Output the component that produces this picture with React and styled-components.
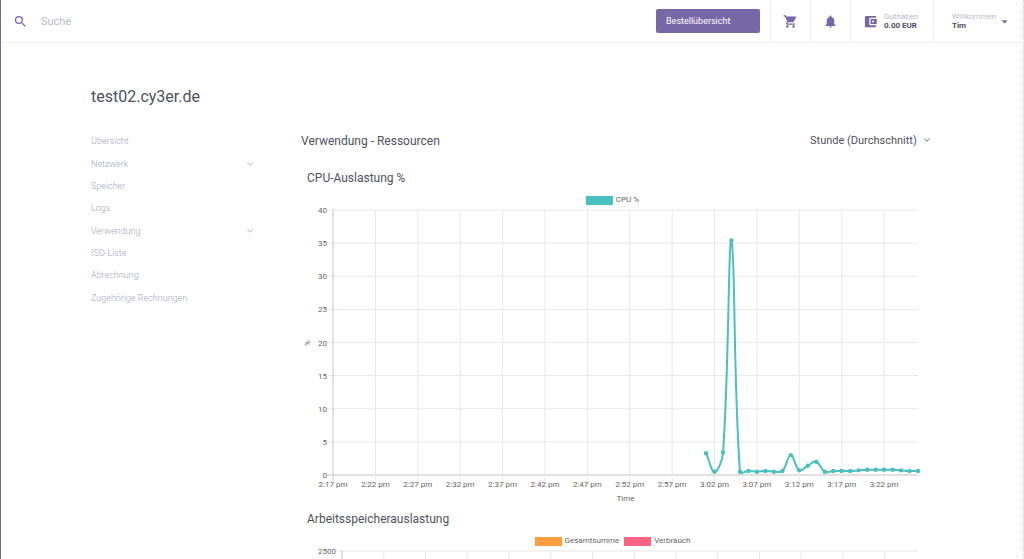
import React, { useState } from 'react';
import styled, { createGlobalStyle } from 'styled-components';
import { MdSearch, MdShoppingCart, MdNotifications, MdAccountBalanceWallet, MdArrowDropDown } from 'react-icons/md';
import { FiChevronDown } from 'react-icons/fi';

const navItems = [
  { label: 'Übersicht' },
  { label: 'Netzwerk', expandable: true },
  { label: 'Speicher' },
  { label: 'Logs' },
  { label: 'Verwendung', expandable: true },
  { label: 'ISO-Liste' },
  { label: 'Abrechnung' },
  { label: 'Zugehörige Rechnungen' },
];

const timeLabels = [
  '2:17 pm', '2:22 pm', '2:27 pm', '2:32 pm', '2:37 pm', '2:42 pm', '2:47 pm',
  '2:52 pm', '2:57 pm', '3:02 pm', '3:07 pm', '3:12 pm', '3:17 pm', '3:22 pm',
];

// one value per minute, the last one is the newest
const cpuValues = [
  3.3, 0.5, 3.4, 35.4, 0.5, 0.6, 0.5, 0.6, 0.5, 0.6, 3.0, 0.7, 1.4,
  2.0, 0.5, 0.6, 0.6, 0.6, 0.7, 0.8, 0.8, 0.8, 0.8, 0.7, 0.6, 0.6,
];

const MINUTES = 69;
const CHART_WIDTH = 623;
const PLOT_RIGHT = 617;
const PLOT_TOP = 4;
const PLOT_BOTTOM = 269;

// smooth curve through the points, control points stay inside the plot
const buildPath = (points) => {
  const tension = 0.4;
  const clamp = (y) => Math.max(PLOT_TOP, Math.min(PLOT_BOTTOM, y));
  const controls = points.map((p, i) => {
    const prev = points[i - 1] || p;
    const next = points[i + 1] || p;
    const d1 = Math.hypot(p.x - prev.x, p.y - prev.y);
    const d2 = Math.hypot(next.x - p.x, next.y - p.y);
    const a = (tension * d1) / (d1 + d2);
    const b = (tension * d2) / (d1 + d2);
    return {
      inX: p.x - a * (next.x - prev.x),
      inY: clamp(p.y - a * (next.y - prev.y)),
      outX: p.x + b * (next.x - prev.x),
      outY: clamp(p.y + b * (next.y - prev.y)),
    };
  });
  return points.map((p, i) => {
    if (i === 0) return `M${p.x} ${p.y}`;
    const from = controls[i - 1];
    const to = controls[i];
    return `C${from.outX} ${from.outY} ${to.inX} ${to.inY} ${p.x} ${p.y}`;
  }).join(' ');
};

const LineChart = ({ title, legend, max, step, left, unit, values = [], color }) => {
  const perMinute = (PLOT_RIGHT - left) / MINUTES;
  const toY = (value) => PLOT_BOTTOM - (value / max) * (PLOT_BOTTOM - PLOT_TOP);
  const ticks = [];
  for (let value = 0; value <= max; value += step) {
    ticks.push(value);
  }
  const points = values.map((value, i) => ({
    x: left + (MINUTES - values.length + 1 + i) * perMinute,
    y: toY(value),
  }));

  return (
    <ChartSection>
      <ChartTitle>{title}</ChartTitle>
      <Legend>
        {legend.map((entry) => (
          <LegendItem key={entry.label}>
            <Swatch $color={entry.color} />
            {entry.label}
          </LegendItem>
        ))}
      </Legend>
      <ChartSvg viewBox={`0 0 ${CHART_WIDTH} 287`} role="img" aria-label={title}>
        {ticks.map((value) => (
          <g key={value}>
            <GridLine x1={left - 6} x2={PLOT_RIGHT} y1={toY(value)} y2={toY(value)} $strong={value === 0} />
            <TickText x={left - 6} y={toY(value) + 3} textAnchor="end">{value}</TickText>
          </g>
        ))}
        {timeLabels.map((label, i) => {
          const x = left + i * 5 * perMinute;
          return (
            <g key={label}>
              <GridLine x1={x} x2={x} y1={PLOT_TOP} y2={PLOT_BOTTOM + 6} $strong={i === 0} />
              <TickText x={x} y={PLOT_BOTTOM + 12} textAnchor="middle">{label}</TickText>
            </g>
          );
        })}
        <TickText x={(left + PLOT_RIGHT) / 2} y={PLOT_BOTTOM + 26} textAnchor="middle">Time</TickText>
        {unit && <TickText transform="translate(9 137) rotate(-90)" textAnchor="middle">{unit}</TickText>}
        {points.length > 0 && <path d={buildPath(points)} fill="none" stroke={color} strokeWidth="2" />}
        {points.map((p) => <circle key={p.x} cx={p.x} cy={p.y} r="2.2" fill={color} />)}
      </ChartSvg>
    </ChartSection>
  );
};

const App = () => {
  const [search, setSearch] = useState('');
  const [range, setRange] = useState('hour');

  return (
    <Page>
      <GlobalStyle />
      <Header>
        <SearchLabel>
          <MdSearch size={15} color="#7867a7" />
          <SearchInput
            aria-label="Suche"
            placeholder="Suche"
            value={search}
            onChange={(e) => setSearch(e.target.value)}
          />
        </SearchLabel>
        <OrderButton type="button">Bestellübersicht</OrderButton>
        <IconButton type="button" aria-label="Warenkorb"><MdShoppingCart size={15} /></IconButton>
        <IconButton type="button" aria-label="Benachrichtigungen"><MdNotifications size={15} /></IconButton>
        <BalanceLink href="#guthaben">
          <MdAccountBalanceWallet size={15} />
          <TwoLines>
            <Muted>Guthaben</Muted>
            <Strong>0.00 EUR</Strong>
          </TwoLines>
        </BalanceLink>
        <UserButton type="button">
          <TwoLines>
            <Muted>Willkommen</Muted>
            <Strong>Tim</Strong>
          </TwoLines>
          <MdArrowDropDown size={15} />
        </UserButton>
      </Header>

      <Main>
        <PageTitle>test02.cy3er.de</PageTitle>
        <Columns>
          <Sidebar>
            {navItems.map((item) => (
              <NavLink key={item.label} href="#">
                {item.label}
                {item.expandable && <FiChevronDown size={10} />}
              </NavLink>
            ))}
          </Sidebar>

          <Content>
            <ContentHeader>
              <SectionTitle>Verwendung - Ressourcen</SectionTitle>
              <SelectWrap>
                <RangeSelect aria-label="Zeitraum" value={range} onChange={(e) => setRange(e.target.value)}>
                  <option value="hour">Stunde (Durchschnitt)</option>
                </RangeSelect>
                <FiChevronDown size={10} />
              </SelectWrap>
            </ContentHeader>

            <LineChart
              title="CPU-Auslastung %"
              legend={[{ label: 'CPU %', color: '#4bc0c0' }]}
              max={40}
              step={5}
              left={32}
              unit="%"
              values={cpuValues}
              color="#4bc0c0"
            />
            <LineChart
              title="Arbeitsspeicherauslastung"
              legend={[
                { label: 'Gesamtsumme', color: '#ff9f40' },
                { label: 'Verbrauch', color: '#ff6384' },
              ]}
              max={2500}
              step={500}
              left={41}
            />
          </Content>
        </Columns>
      </Main>
    </Page>
  );
};

export default App;

const GlobalStyle = createGlobalStyle`
  * {
    box-sizing: border-box;
  }
  html {
    scrollbar-width: none;
  }
  body {
    margin: 0;
    background: #fff;
    color: #50525f;
    font-family: Roboto, "Liberation Sans", sans-serif;
  }
  button, input, select {
    font-family: inherit;
  }
`;

const Page = styled.div`
  min-height: 100vh;
  border-left: 1px solid #6f6c97;
  border-right: 1px dotted #d4d4da;
`;

const Header = styled.header`
  display: flex;
  align-items: center;
  height: 43px;
  border-bottom: 1px solid #f1f1f4;
`;

const SearchLabel = styled.label`
  display: flex;
  flex: 1;
  align-items: center;
  gap: 13px;
  padding-left: 12px;
`;

const SearchInput = styled.input`
  flex: 1;
  min-width: 0;
  padding: 0;
  border: 0;
  outline: 0;
  background: none;
  font-size: 11px;
  color: #50525f;
  &::placeholder {
    color: #b9b9cd;
  }
`;

const OrderButton = styled.button`
  width: 104px;
  height: 24px;
  margin-right: 10px;
  padding: 0 10px;
  border: 0;
  border-radius: 2px;
  background: #7867a7;
  color: #fff;
  font-size: 9px;
  text-align: left;
`;

const IconButton = styled.button`
  display: flex;
  align-items: center;
  justify-content: center;
  width: 40px;
  height: 42px;
  padding: 0;
  border: 0;
  border-left: 1px solid #f1f1f4;
  background: none;
  color: #7867a7;
`;

const BalanceLink = styled.a`
  display: flex;
  align-items: center;
  gap: 6px;
  width: 83px;
  height: 42px;
  padding-left: 12px;
  border-left: 1px solid #f1f1f4;
  color: #7867a7;
  text-decoration: none;
`;

const UserButton = styled.button`
  display: flex;
  align-items: center;
  gap: 1px;
  width: 90px;
  height: 42px;
  padding: 0 10px 0 18px;
  border: 0;
  border-left: 1px solid #f1f1f4;
  background: none;
  color: #7867a7;
  text-align: left;
`;

const TwoLines = styled.span`
  display: flex;
  flex-direction: column;
  font-size: 8px;
  line-height: 9px;
`;

const Muted = styled.span`
  color: #b9b9cd;
`;

const Strong = styled.strong`
  color: #50525f;
  font-weight: 700;
`;

const Main = styled.main`
  padding: 43px 89px 0 90px;
`;

const PageTitle = styled.h1`
  margin: 0;
  font-size: 16px;
  line-height: 21px;
  font-weight: 400;
`;

const Columns = styled.div`
  display: grid;
  grid-template-columns: 164px 1fr;
  align-items: start;
  gap: 46px;
  margin-top: 23px;
`;

const Sidebar = styled.nav`
  display: flex;
  flex-direction: column;
  height: 179px;
`;

const NavLink = styled.a`
  display: flex;
  flex: 1;
  align-items: center;
  justify-content: space-between;
  color: #a6a6be;
  font-size: 9px;
  font-weight: 300;
  text-decoration: none;
`;

const Content = styled.div`
  min-width: 0;
`;

const ContentHeader = styled.div`
  display: flex;
  align-items: center;
  justify-content: space-between;
  height: 22px;
`;

const SectionTitle = styled.h2`
  margin: 0;
  font-size: 12px;
  font-weight: 400;
`;

const SelectWrap = styled.div`
  display: flex;
  align-items: center;
  gap: 5px;
  padding: 0 2px 2px 0;
`;

const RangeSelect = styled.select`
  padding: 0;
  border: 0;
  outline: 0;
  appearance: none;
  background: none;
  color: #50525f;
  font-size: 11px;
`;

const ChartSection = styled.section`
  margin-right: 10px;
  padding-top: 18px;
`;

const ChartTitle = styled.h3`
  margin: 0 0 9px 6px;
  font-size: 12px;
  line-height: 16px;
  font-weight: 400;
`;

const Legend = styled.div`
  display: flex;
  justify-content: center;
  gap: 5px;
  margin-bottom: 1px;
`;

const LegendItem = styled.span`
  display: flex;
  align-items: center;
  gap: 3px;
  color: #666;
  font-size: 8px;
  line-height: 10px;
`;

const Swatch = styled.i`
  width: 27px;
  height: 9px;
  background: ${(props) => props.$color};
`;

const ChartSvg = styled.svg`
  display: block;
  width: 100%;
  height: auto;
  overflow: visible;
`;

const GridLine = styled.line`
  stroke: ${(props) => (props.$strong ? '#c4c4c4' : '#e9e9e9')};
  stroke-width: 1;
`;

const TickText = styled.text`
  fill: #666;
  font-family: Roboto, "Liberation Sans", sans-serif;
  font-size: 8px;
`;
